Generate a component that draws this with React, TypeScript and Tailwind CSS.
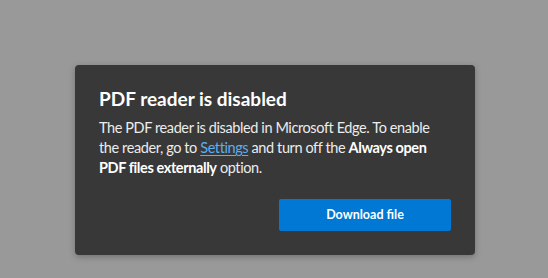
export default function App() {
  return (
    <div
      className="w-[548px] h-[278px] bg-[#999999] pt-[65px] pl-[75px]"
      style={{ fontFamily: '"Segoe UI", Lato, "Open Sans", sans-serif' }}
    >
      <div className="w-[400px] h-[190px] rounded-[4px] bg-[#383838] px-6 pt-[20px] pb-6 flex flex-col shadow-[0_2px_6px_rgba(0,0,0,0.25)]">
        <h1 className="text-[19px] leading-[28px] font-bold text-white">PDF reader is disabled</h1>
        <p className="mt-[5px] text-[14.5px] leading-[20px] tracking-[-0.4px] text-[#ececec] whitespace-nowrap">
          The PDF reader is disabled in Microsoft Edge. To enable
          <br />
          the reader, go to{' '}
          <a href="#" className="text-[#5caeef] underline underline-offset-2">
            Settings
          </a>{' '}
          and turn off the <span className="font-bold text-white">Always open</span>
          <br />
          <span className="font-bold text-white">PDF files externally</span> option.
        </p>
        <div className="mt-auto flex justify-end">
          <button className="w-[172px] h-[32px] rounded-[2px] bg-[#0078d4] text-white text-[12.5px] font-bold">
            Download file
          </button>
        </div>
      </div>
    </div>
  );
}
